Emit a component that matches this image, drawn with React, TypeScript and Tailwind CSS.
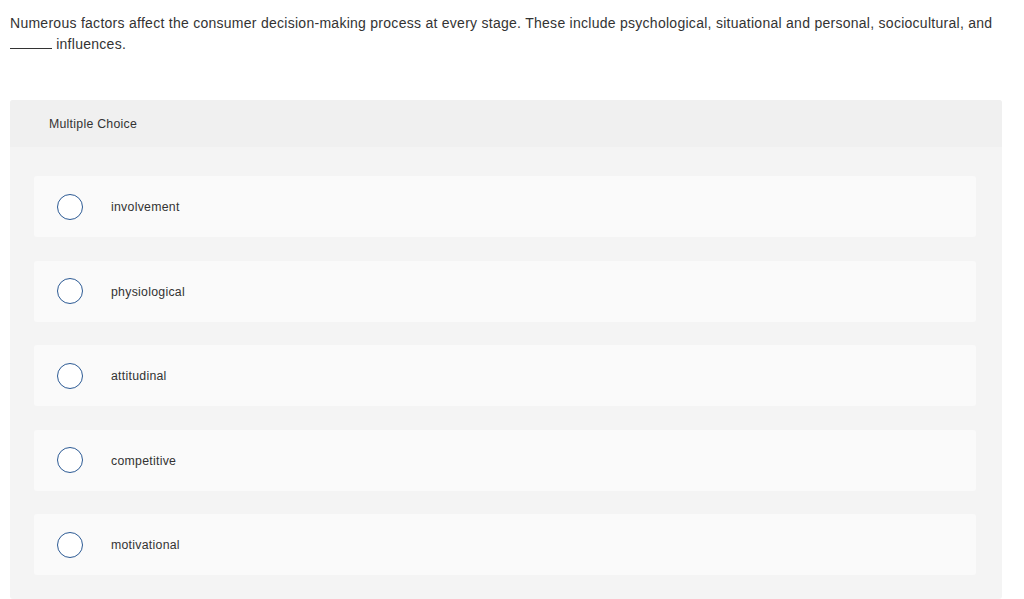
export default function App() {
  const options = ['involvement', 'physiological', 'attitudinal', 'competitive', 'motivational']

  return (
    <div className="min-h-screen bg-white text-[#333] font-['Liberation_Sans',Arial,sans-serif] tracking-[0.27px]">
      <div className="px-[10px] pt-[13px] text-[14px] leading-[21px]">
        <p>
          Numerous factors affect the consumer decision-making process at every stage. These include psychological,
          situational and personal, sociocultural, and
          <br />
          <span className="inline-block w-[42px] border-b border-[#333] align-baseline"></span> influences.
        </p>
      </div>

      <div className="mx-[10px] mt-[45px] w-[992px] rounded-[3px] bg-[#f4f4f4] overflow-hidden">
        <div className="h-[47px] bg-[#f0f0f0] pl-[39px] pt-[1px] flex items-center text-[12.3px]">
          Multiple Choice
        </div>
        <div className="pl-[24px] pr-[26px] pt-[29px] pb-[24px] flex flex-col gap-[23.5px]">
          {options.map((opt) => (
            <label key={opt} className="h-[61px] rounded-[3px] bg-[#fafafa] flex items-center">
              <span className="ml-[23px] w-[26px] h-[26px] rounded-full border border-[#2c5a94] bg-white shrink-0" />
              <span className="ml-[28px] pt-[2px] text-[12.3px]">{opt}</span>
            </label>
          ))}
        </div>
      </div>
    </div>
  )
}
